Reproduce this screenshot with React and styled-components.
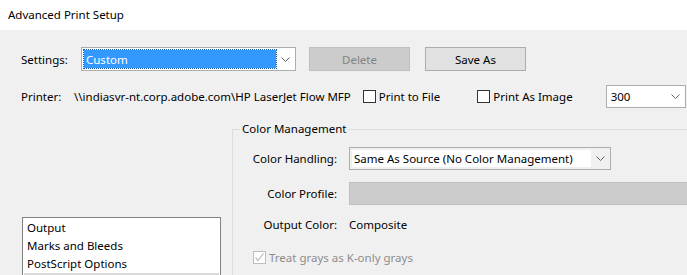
import React from 'react';
import styled, { createGlobalStyle } from 'styled-components';

const GlobalStyle = createGlobalStyle`
  html, body {
    margin: 0;
    padding: 0;
    height: 275px;
    overflow: hidden;
    background: #f0f0f0;
  }
  body {
    font-family: "Noto Sans", "Open Sans", sans-serif;
    font-size: 11.5px;
    color: #000;
  }
`;

const Window = styled.div`
  width: 687px;
  height: 275px;
  display: flex;
  flex-direction: column;
  overflow: hidden;
`;

const TitleBar = styled.div`
  height: 30px;
  flex: none;
  background: #fff;
  display: flex;
  align-items: center;
  padding-left: 8px;
  padding-bottom: 1px;
  box-sizing: border-box;
`;

const Body = styled.div`
  flex: 1;
  background: #f0f0f0;
  padding: 17px 0 0 21px;
  display: flex;
  flex-direction: column;
`;

const Row = styled.div`
  display: flex;
  align-items: center;
  height: ${p => p.$h || 24}px;
  margin-top: ${p => p.$mt || 0}px;
  white-space: nowrap;
`;

const Label = styled.span`
  width: ${p => p.$w}px;
  flex: none;
`;

const Combo = styled.div`
  width: ${p => p.$w}px;
  height: ${p => p.$h || 24}px;
  box-sizing: border-box;
  border: 1px solid #adadad;
  background: ${p => (p.$white ? '#fff' : '#f0f0f0')};
  display: flex;
  align-items: stretch;
  padding: 2px 0 2px 2px;
  margin-left: ${p => p.$ml || 0}px;
  flex: none;
`;

const ComboValue = styled.div`
  flex: 1;
  display: flex;
  align-items: center;
  padding-left: 2px;
  background: ${p => (p.$selected ? '#3399ff' : '#fff')};
  color: ${p => (p.$selected ? '#fff' : '#000')};
  outline: ${p => (p.$selected ? '1px dotted #1a5fa8' : 'none')};
`;

const ComboArrow = styled.div`
  width: 19px;
  flex: none;
  display: flex;
  align-items: center;
  justify-content: center;
`;

const Button = styled.div`
  width: 101px;
  height: 24px;
  box-sizing: border-box;
  flex: none;
  display: flex;
  align-items: center;
  justify-content: center;
  margin-left: ${p => p.$ml}px;
  background: ${p => (p.$disabled ? '#cccccc' : '#e1e1e1')};
  border: 1px solid ${p => (p.$disabled ? '#bfbfbf' : '#adadad')};
  color: ${p => (p.$disabled ? '#838383' : '#000')};
`;

const Check = styled.span`
  width: 13px;
  height: 13px;
  box-sizing: border-box;
  flex: none;
  border: 1px solid ${p => (p.$disabled ? '#bcbcbc' : '#333')};
  background: #fff;
  margin-left: ${p => p.$ml || 0}px;
  margin-right: 3px;
  display: flex;
  align-items: center;
  justify-content: center;
`;

const Lower = styled.div`
  flex: 1;
  display: grid;
  grid-template-columns: 211px 1fr;
  margin-top: 13px;
  min-height: 0;
`;

const ListBox = styled.div`
  margin-top: 96px;
  margin-left: 1px;
  width: 199px;
  height: 80px;
  box-sizing: border-box;
  border: 1px solid #828282;
  background: #fff;
  padding: 1px 1px 0 1px;
`;

const ListItem = styled.div`
  height: 18px;
  line-height: 18px;
  padding-left: 3px;
  background: ${p => (p.$active ? '#d9d9d9' : 'transparent')};
`;

const Group = styled.fieldset`
  margin: 0;
  padding: 0;
  border: 1px solid #dcdcdc;
  border-right: none;
  border-bottom: none;
  min-width: 0;
`;

const Legend = styled.legend`
  margin-left: 7px;
  padding: 0 2px;
  line-height: 16px;
`;

const Form = styled.div`
  display: grid;
  grid-template-columns: 104px 1fr;
  column-gap: 12px;
  margin-top: 10px;
  white-space: nowrap;
`;

const FieldLabel = styled.div`
  display: flex;
  align-items: center;
  justify-content: flex-end;
  height: ${p => p.$h || 23}px;
  margin-top: ${p => p.$mt || 0}px;
`;

const FieldValue = styled.div`
  display: flex;
  align-items: center;
  height: ${p => p.$h || 23}px;
  margin-top: ${p => p.$mt || 0}px;
`;

const Disabled = styled.div`
  width: 340px;
  height: 23px;
  box-sizing: border-box;
  background: #cccccc;
  border: 1px solid #bfbfbf;
`;

const CheckRow = styled.div`
  grid-column: 1 / 3;
  display: flex;
  align-items: center;
  height: 16px;
  margin-top: 13px;
  padding-left: 20px;
  color: ${p => (p.$disabled ? '#8d8d8d' : '#000')};
`;

const Chevron = () => (
  <svg width="9" height="5" viewBox="0 0 9 5">
    <path d="M0.5 0.5 L4.5 4.5 L8.5 0.5" fill="none" stroke="#606060" strokeWidth="1" />
  </svg>
);

const Tick = ({ color }) => (
  <svg width="11" height="11" viewBox="0 0 11 11">
    <path d="M1.5 5.5 L4 8.5 L9.5 1.5" fill="none" stroke={color} strokeWidth="1.2" />
  </svg>
);

export default function App() {
  return (
    <Window>
      <GlobalStyle />
      <TitleBar>Advanced Print Setup</TitleBar>
      <Body>
        <Row $h={24}>
          <Label $w={60}>Settings:</Label>
          <Combo $w={215} $white>
            <ComboValue $selected>Custom</ComboValue>
            <ComboArrow><Chevron /></ComboArrow>
          </Combo>
          <Button $ml={13} $disabled>Delete</Button>
          <Button $ml={15}>Save As</Button>
        </Row>
        <Row $h={23} $mt={14}>
          <Label $w={53}>Printer:</Label>
          <span>\\indiasvr-nt.corp.adobe.com\HP LaserJet Flow MFP</span>
          <Check $ml={12} />
          <span>Print to File</span>
          <Check $ml={37} />
          <span>Print As Image</span>
          <Combo $w={80} $h={23} $ml={33} $white>
            <ComboValue>300</ComboValue>
            <ComboArrow><Chevron /></ComboArrow>
          </Combo>
        </Row>
        <Lower>
          <div>
            <ListBox>
              <ListItem>Output</ListItem>
              <ListItem>Marks and Bleeds</ListItem>
              <ListItem>PostScript Options</ListItem>
              <ListItem $active />
            </ListBox>
          </div>
          <Group>
            <Legend>Color Management</Legend>
            <Form>
              <FieldLabel>Color Handling:</FieldLabel>
              <FieldValue>
                <Combo $w={262} $h={23}>
                  <ComboValue>Same As Source (No Color Management)</ComboValue>
                  <ComboArrow><Chevron /></ComboArrow>
                </Combo>
              </FieldValue>
              <FieldLabel $mt={12}>Color Profile:</FieldLabel>
              <FieldValue $mt={12}><Disabled /></FieldValue>
              <FieldLabel $mt={8}>Output Color:</FieldLabel>
              <FieldValue $mt={8}>Composite</FieldValue>
              <CheckRow $disabled>
                <Check $disabled><Tick color="#bcbcbc" /></Check>
                Treat grays as K-only grays
              </CheckRow>
            </Form>
          </Group>
        </Lower>
      </Body>
    </Window>
  );
}
